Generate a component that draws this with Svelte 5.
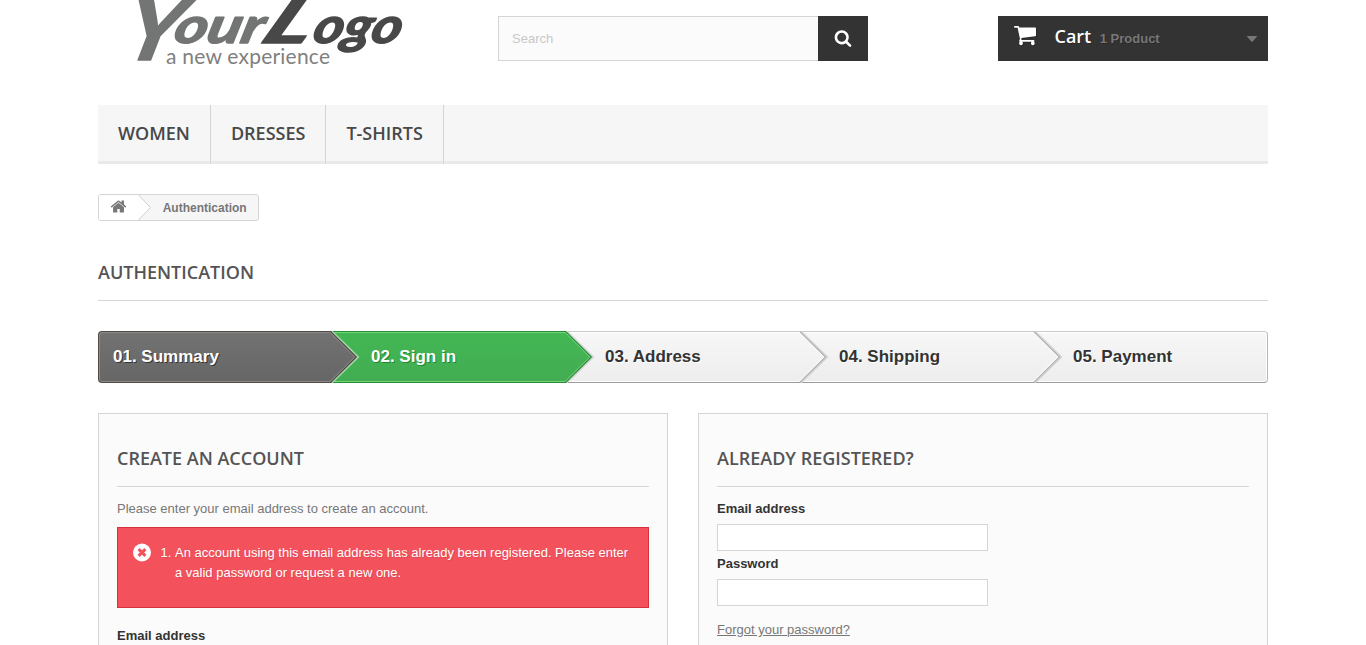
<script>
  const menu = ['Women', 'Dresses', 'T-shirts'];
  const steps = [
    { label: '01. Summary', kind: 'done' },
    { label: '02. Sign in', kind: 'current' },
    { label: '03. Address', kind: 'todo' },
    { label: '04. Shipping', kind: 'todo' },
    { label: '05. Payment', kind: 'todo' }
  ];
  const tones = {
    done: { top: '#727272', bottom: '#666', edge: '#514943', inner: '#8a8a8a' },
    current: { top: '#43b754', bottom: '#42ac52', edge: '#268b37', inner: '#74d578' },
    todo: { top: '#f7f7f7', bottom: '#ededed', edge: '#b4b4b4', inner: '#fff' }
  };
</script>

<div class="page">
  <header>
    <a class="logo" href="#home" aria-label="Your Logo">
      <svg width="320" height="80" viewBox="98 0 320 80">
        <g class="brush" fill="#737474" stroke="#737474">
          <text transform="translate(119 60) skewX(-14)" font-size="86" textLength="58" lengthAdjust="spacingAndGlyphs">Y</text>
          <text transform="translate(172 42.500) skewX(-14)" font-size="50" textLength="89" lengthAdjust="spacingAndGlyphs">our</text>
        </g>
        <g class="brush" fill="#484848" stroke="#484848">
          <text transform="translate(258 42.500) skewX(-28)" font-size="66" textLength="48" lengthAdjust="spacingAndGlyphs">L</text>
          <text transform="translate(311 42.500) skewX(-14)" font-size="50" textLength="88" lengthAdjust="spacingAndGlyphs">ogo</text>
        </g>
        <text class="tagline" x="166" y="64" textLength="164" fill="#808080">a new experience</text>
      </svg>
    </a>
    <form class="search">
      <input type="text" placeholder="Search" />
      <button type="button" aria-label="Search">
        <svg width="18" height="18" viewBox="0 0 1792 1792" fill="#fff"><path d="M1216 832q0-185-131.5-316.5t-316.5-131.5-316.5 131.5-131.5 316.5 131.5 316.5 316.5 131.5 316.5-131.5 131.5-316.5zm512 832q0 52-38 90t-90 38q-54 0-90-38l-343-342q-179 124-399 124-143 0-273.5-55.5t-225-150-150-225-55.5-273.5 55.5-273.5 150-225 225-150 273.5-55.5 273.5 55.5 225 150 150 225 55.5 273.5q0 220-124 399l343 343q37 37 37 90z" /></svg>
      </button>
    </form>
    <a class="cart" href="#cart">
      <svg class="trolley" width="22" height="20" viewBox="0 0 22 20" fill="#fff">
        <path d="M.8 0H4.200Q4.900 0 5.100.8L5.300 1.600H21.100Q22 1.600 22 2.500V9.300Q22 10.100 21.200 10.200L7.300 11.900 7.600 13.200 7.200 14H19.500Q20.400 14 20.400 14.800T19.500 15.700H6.100Q5.200 15.700 5.200 14.800 5.200 14.300 6 12.900L3.600 1.700H.8Q0 1.700 0 .850T.8 0Z" />
        <rect x="5.200" y="15" width="3.600" height="4.200" rx="1.700" />
        <rect x="17" y="15" width="3.600" height="4.200" rx="1.700" />
      </svg>
      <b>Cart</b>
      <span>1 Product</span>
      <svg class="caret" width="12" height="6" viewBox="0 0 12 6"><path d="M.6 0H11.4L6.5 5.7Q6 6 5.500 5.700Z" fill="#777" /></svg>
    </a>
  </header>

  <nav class="menu">
    {#each menu as item}<a href="#{item}">{item}</a>{/each}
  </nav>

  <div class="crumbs">
    <a class="home" href="#home" aria-label="Home">
      <svg width="17" height="17" viewBox="0 0 1792 1792" fill="#777"><path d="M1472 992v480q0 26-19 45t-45 19h-384v-384h-256v384h-384q-26 0-45-19t-19-45v-480q0-1 .5-3t.5-3l575-474 575 474q1 2 1 6zm223-69l-62 74q-8 9-21 11h-3q-13 0-21-7l-692-577-692 577q-12 8-24 7-13-2-21-11l-62-74q-8-10-7-23.5t11-21.5l719-599q32-26 76-26t76 26l244 204v-195q0-14 9-23t23-9h192q14 0 23 9t9 23v408l219 182q10 8 11 21.5t-7 23.5z" /></svg>
    </a>
    <svg class="notch" width="14" height="25" viewBox="0 0 14 25"><path d="M0 0H1L13 12.500 1 25H0Z" fill="#fff" /><path d="M.5 0L12.500 12.500.5 25" fill="none" stroke="#ccc" /></svg>
    <span>Authentication</span>
  </div>

  <h1>Authentication</h1>

  <ol class="steps">
    {#each steps as step, i}
      {@const t = tones[step.kind]}
      <li class={step.kind}>
        <span>{step.label}</span>
        {#if i < steps.length - 1}
          <svg class="arrow" width="32" height="52" viewBox="0 0 32 52">
            <defs>
              <linearGradient id="fill{i}" x2="0" y2="1"><stop stop-color={t.top} /><stop offset="1" stop-color={t.bottom} /></linearGradient>
            </defs>
            <path d="M0 1H3L29 26 3 51H0Z" fill="url(#fill{i})" />
            <path d="M3.500 .5L29.600 26 3.500 51.500" fill="none" stroke={i === 0 ? '#a5d8a9' : '#d2d2d2'} stroke-width="2.600" />
            <path d="M2.500 .5L28.300 26 2.500 51.500" fill="none" stroke={t.edge} stroke-width="1.200" />
            <path d="M0 1.500H2.200L26.800 26 2 50.500H0" fill="none" stroke={t.inner} />
            <path d="M0 .5H3" stroke={step.kind === 'todo' ? '#cacaca' : t.edge} />
            <path d="M0 51.500H3" stroke={step.kind === 'todo' ? '#9b9b9b' : t.edge} />
          </svg>
        {/if}
      </li>
    {/each}
  </ol>

  <main>
    <section>
      <h2>Create an account</h2>
      <p>Please enter your email address to create an account.</p>
      <div class="alert">
        <svg width="18" height="19" viewBox="0 0 18 19"><circle cx="9" cy="9.500" r="9" fill="#fff" /><path d="M5.600 6.100L12.400 12.900M12.400 6.100L5.600 12.900" stroke="#f3515c" stroke-width="3" /></svg>
        <ol><li>An account using this email address has already been registered. Please enter a valid password or request a new one.</li></ol>
      </div>
      <label for="new-email">Email address</label>
      <input id="new-email" type="text" />
    </section>
    <section>
      <h2>Already registered?</h2>
      <label for="email">Email address</label>
      <input id="email" type="text" />
      <label for="password">Password</label>
      <input id="password" type="password" />
      <a class="forgot" href="#forgot">Forgot your password?</a>
    </section>
  </main>
</div>

<style>
  :global(body) { background: #fff; overflow: hidden; }
  * { box-sizing: border-box; }
  .page {
    width: 1170px;
    height: 645px;
    margin: 0 auto;
    overflow: hidden;
    color: #777;
    font: 13px/18px "Liberation Sans", Arial, sans-serif;
  }
  a { color: inherit; text-decoration: none; }
  header { display: flex; height: 105px; }
  .logo { width: 400px; }
  .logo svg { display: block; }
  .brush { font-family: Lato, sans-serif; font-style: italic; font-weight: bold; stroke-width: 1.5px; stroke-linejoin: round; }
  .tagline { font: 400 21px Lato, sans-serif; }
  .search { display: flex; width: 370px; height: 45px; margin: 16px 130px 0 0; }
  .search input {
    width: 320px;
    height: 45px;
    padding: 0 13px;
    border: 1px solid #d6d4d4;
    border-right: 0;
    border-radius: 0;
    background: #fbfbfb;
    font: 13px "Liberation Sans", Arial, sans-serif;
  }
  .search input::placeholder { color: #c8c8c8; }
  .search button { display: flex; align-items: center; justify-content: center; width: 50px; padding: 0 0 1px; border: 0; background: #333; }
  .cart {
    display: flex;
    align-items: center;
    width: 270px;
    height: 45px;
    margin-top: 16px;
    padding: 0 10px 0 16px;
    background: #333;
    text-shadow: 1px 1px rgba(0, 0, 0, .2);
  }
  .trolley { margin: 0 18.500px 5px 0; filter: drop-shadow(1px 1px rgba(0, 0, 0, .2)); }
  .cart b { margin: 0 8.500px 5px 0; color: #fff; font: 600 18px/22px "Open Sans", sans-serif; }
  .cart span { color: #777; font-weight: bold; }
  .caret { margin-left: auto; }
  .menu { display: flex; height: 59px; border-bottom: 3px solid #e9e9e9; background: #f6f6f6; }
  .menu a {
    height: 59px;
    padding: 17px 20px 0;
    border-right: 1px solid #d6d4d4;
    color: #484848;
    font: 600 18px/22px "Open Sans", sans-serif;
    text-transform: uppercase;
  }
  .crumbs {
    display: flex;
    width: 161px;
    height: 27px;
    margin-top: 30px;
    border: 1px solid #d6d4d4;
    border-radius: 3px;
    overflow: hidden;
    background: #f6f6f6;
    font: bold 12px/26px "Liberation Sans", Arial, sans-serif;
  }
  .home { width: 39px; padding: 3px 0 0 11px; background: #fff; line-height: 0; }
  .notch { margin-right: 10.700px; }
  h1, h2 {
    margin: 0;
    border-bottom: 1px solid #d6d4d4;
    color: #555454;
    font: 600 18px/22px "Open Sans", sans-serif;
    text-transform: uppercase;
  }
  h1 { height: 40px; margin: 40px 0 30px; }
  .steps {
    display: grid;
    grid-template-columns: repeat(5, 234px);
    height: 52px;
    margin: 0 0 30px;
    padding: 0;
    list-style: none;
    color: #333;
    font: bold 17px/50px "Liberation Sans", Arial, sans-serif;
  }
  .steps li {
    position: relative;
    height: 52px;
    padding-left: 39px;
    border-top: 1px solid #cacaca;
    border-bottom: 1px solid #9b9b9b;
    background: linear-gradient(#f7f7f7, #ededed);
    box-shadow: inset 0 1px #fff, inset 0 -1px #fff;
    text-shadow: 1px 1px #fff;
  }
  .steps li:first-child { padding-left: 14px; border-left: 1px solid #514943; border-radius: 4px 0 0 4px; }
  .steps li:last-child { border-right: 1px solid #b7b7b7; border-radius: 0 4px 4px 0; box-shadow: inset -1px 1px #fff, inset 0 -1px #fff; }
  .steps .done {
    border-color: #514943;
    background: linear-gradient(#727272, #666);
    box-shadow: inset 1px 1px #8a8a8a, inset 0 -1px #8a8a8a;
    color: #fff;
    text-shadow: 1px 1px rgba(0, 0, 0, .5);
  }
  .steps .current {
    border-color: #268b37;
    background: linear-gradient(#43b754, #42ac52);
    box-shadow: inset 0 1px #74d578, inset 0 -1px #74d578;
    color: #fff;
    text-shadow: 1px 1px #208931;
  }
  .arrow { position: absolute; z-index: 1; top: -1px; right: -29px; }
  .done .arrow { right: -28px; }
  main { display: grid; grid-template-columns: 570px 570px; gap: 30px; }
  section { height: 330px; padding: 33px 18px 0; border: 1px solid #d6d4d4; background: #fbfbfb; }
  h2 { height: 40px; margin-bottom: 13px; }
  p { margin: 0 0 9px; }
  .alert {
    display: flex;
    height: 81px;
    margin-bottom: 19px;
    padding: 15px 15px 0;
    border: 1px solid #d4323d;
    background: #f3515c;
    color: #fff;
    line-height: 20px;
    text-shadow: 1px 1px rgba(0, 0, 0, .1);
  }
  .alert svg { flex: none; }
  .alert ol { margin: 0; padding-left: 24px; }
  label { display: block; margin-bottom: 6px; color: #333; font-weight: bold; }
  section input { display: block; width: 271px; height: 27px; margin: 0 0 4px; border: 1px solid #d6d4d4; border-radius: 0; background: #fff; }
  .forgot { display: inline-block; margin-top: 11px; text-decoration: underline; }
</style>
